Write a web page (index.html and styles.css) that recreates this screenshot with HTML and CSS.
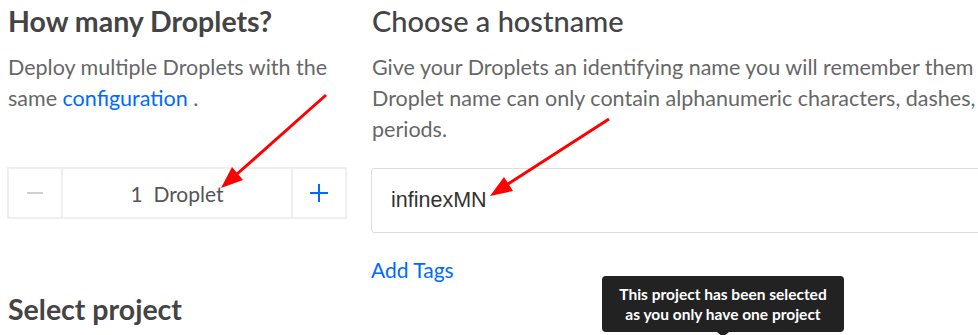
FILE: index.html
```html
<!DOCTYPE html>
<html lang="en">
<head>
    <meta charset="UTF-8">
    <meta name="viewport" content="width=device-width, initial-scale=1.0">
    <title>Create Droplets</title>
    <link rel="stylesheet" href="styles.css">
</head>
<body>
    <div class="page">
        <section class="col col-left">
            <h3 class="section-title strong">How many Droplets?</h3>
            <p class="section-text">Deploy multiple Droplets with the same <a class="link" href="#">configuration</a> .</p>
            <div class="stepper">
                <button class="step-btn" type="button">
                    <svg width="16" height="16" viewBox="0 0 16 16"><line x1="0" y1="8" x2="16" y2="8" stroke="#cfcfcf" stroke-width="2"/></svg>
                </button>
                <div class="step-value">1&nbsp; Droplet</div>
                <button class="step-btn" type="button">
                    <svg width="18" height="18" viewBox="0 0 18 18"><line x1="0" y1="9" x2="18" y2="9" stroke="#0069ff" stroke-width="2"/><line x1="9" y1="0" x2="9" y2="18" stroke="#0069ff" stroke-width="2"/></svg>
                </button>
            </div>
            <h3 class="section-title strong project-title">Select project</h3>
        </section>
        <section class="col col-right">
            <h3 class="section-title">Choose a hostname</h3>
            <p class="section-text">Give your Droplets an identifying name you will remember them by. Your Droplet name can only contain alphanumeric characters, dashes, and periods.</p>
            <div class="hostname-input">infinexMN</div>
            <a class="link add-tags" href="#">Add Tags</a>
            <div class="tooltip">This project has been selected<br>as you only have one project</div>
        </section>
        <svg class="annotations" width="978" height="335" viewBox="0 0 978 335">
            <line x1="326" y1="95" x2="237" y2="174" stroke="#ff0000" stroke-width="3"/>
            <polygon points="221,188 243,180 232,167" fill="#ff0000"/>
            <line x1="609" y1="119" x2="508" y2="184" stroke="#ff0000" stroke-width="3"/>
            <polygon points="490,196 513,191 504,177" fill="#ff0000"/>
        </svg>
    </div>
</body>
</html>
```
FILE: styles.css
```css
body {
    margin: 0;
    padding: 0;
    background-color: #ffffff;
    color: #444444;
    font-family: "Lato", "Liberation Sans", sans-serif;
    overflow: hidden;
}
.page {
    position: relative;
    display: flex;
    gap: 23px;
    padding: 0 0 0 7px;
    width: 1400px;
    height: 335px;
}
.col {
    display: flex;
    flex-direction: column;
    align-items: flex-start;
}
.col-left {
    width: 341px;
}
.col-right {
    position: relative;
    width: 720px;
}
.section-title {
    margin: 4px 0 0 1px;
    font-size: 29px;
    line-height: 34px;
    font-weight: 500;
    color: #444444;
}
.section-title.strong {
    font-size: 28.5px;
    font-weight: 700;
}
.section-text {
    margin: 14px 0 0 1px;
    font-size: 21.5px;
    line-height: 31px;
    color: #676767;
}
.link {
    color: #0069ff;
    text-decoration: none;
}
.stepper {
    display: flex;
    margin-top: 53px;
    width: 340px;
    height: 52px;
    box-sizing: border-box;
    border: 2px solid #efefef;
}
.step-btn {
    display: flex;
    align-items: center;
    justify-content: center;
    width: 52px;
    padding: 0;
    border: 0;
    background: #ffffff;
}
.step-value {
    flex: 1;
    display: flex;
    align-items: center;
    justify-content: center;
    border-left: 2px solid #efefef;
    border-right: 2px solid #efefef;
    font-size: 21px;
    color: #555555;
}
.project-title {
    margin-top: 73px;
}
.hostname-input {
    margin-top: 23px;
    width: 640px;
    height: 65px;
    box-sizing: border-box;
    border: 1px solid #dddddd;
    border-radius: 3px;
    padding: 0 19px;
    display: flex;
    align-items: center;
    font-family: "Liberation Sans", sans-serif;
    font-size: 21.5px;
    color: #333333;
}
.add-tags {
    margin-top: 24px;
    font-size: 21px;
}
.tooltip {
    position: absolute;
    left: 231px;
    top: 276px;
    width: 242px;
    height: 56px;
    box-sizing: border-box;
    padding-top: 8px;
    background-color: #222222;
    border-radius: 4px;
    color: #ffffff;
    font-size: 15.5px;
    font-weight: 700;
    line-height: 20px;
    text-align: center;
}
.tooltip:after {
    content: "";
    position: absolute;
    left: 115px;
    bottom: -5px;
    border-left: 6px solid transparent;
    border-right: 6px solid transparent;
    border-top: 5px solid #222222;
}
.annotations {
    position: absolute;
    top: 0;
    left: 0;
}
```
